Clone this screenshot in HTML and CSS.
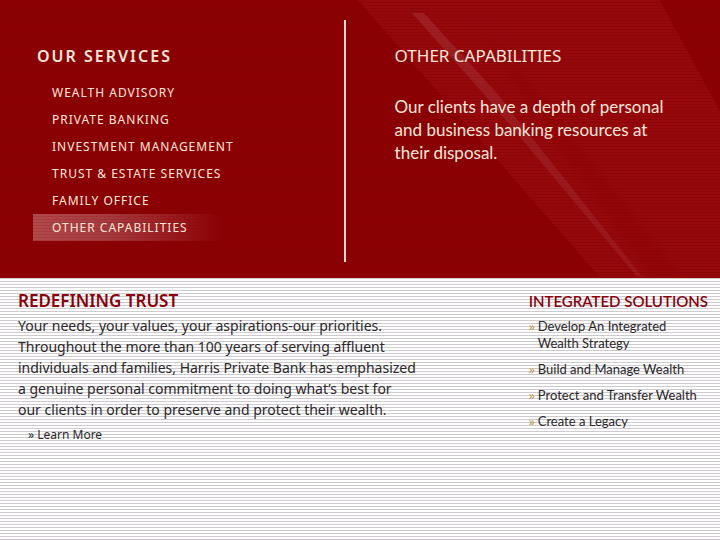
FILE: index.html
```html
<!DOCTYPE html>
<html lang="en">
<head>
<meta charset="utf-8">
<meta name="viewport" content="width=device-width, initial-scale=1">
<title>Harris Private Bank</title>
<link rel="stylesheet" href="styles.css">
</head>
<body>
<section class="hero">
  <svg class="rays" viewBox="0 0 375 278" preserveAspectRatio="none" aria-hidden="true">
    <defs>
      <linearGradient id="beam" x1="0" y1="0" x2="0" y2="1">
        <stop offset="0" stop-color="#fff" stop-opacity=".09"/>
        <stop offset=".5" stop-color="#fff" stop-opacity=".07"/>
        <stop offset="1" stop-color="#fff" stop-opacity=".06"/>
      </linearGradient>
      <filter id="soft" x="-20%" y="-20%" width="140%" height="140%"><feGaussianBlur stdDeviation="4"/></filter>
      <pattern id="lines" width="3" height="3" patternUnits="userSpaceOnUse">
        <path d="M0 0H3V2H0Z" fill="#e04a50" fill-opacity=".12"/>
        <path d="M0 2H3V3H0Z" fill="#e04a50" fill-opacity=".07"/>
      </pattern>
    </defs>
    <path d="M12 0H314L375 112V278H255Z" fill="url(#lines)"/>
    <path d="M130 20L160 55L338 278H308L200 130Z" fill="#8b0003" fill-opacity=".4" filter="url(#soft)"/>
    <path d="M66 13H78L150 92L296 276H291L138 94Z" fill="url(#beam)"/>
  </svg>
  <nav class="services">
    <h1>OUR SERVICES</h1>
    <ul>
      <li><a href="#wealth">WEALTH ADVISORY</a></li>
      <li><a href="#private">PRIVATE BANKING</a></li>
      <li><a href="#investment">INVESTMENT MANAGEMENT</a></li>
      <li><a href="#trust">TRUST &amp; ESTATE SERVICES</a></li>
      <li><a href="#family">FAMILY OFFICE</a></li>
      <li><a class="current" href="#other" aria-current="page">OTHER CAPABILITIES</a></li>
    </ul>
  </nav>
  <article class="detail" id="other">
    <h2>OTHER CAPABILITIES</h2>
    <p>Our clients have a depth of personal<br>and business banking resources at<br>their disposal.</p>
  </article>
</section>
<main class="lower">
  <section class="trust">
    <h2>REDEFINING TRUST</h2>
    <p>Your needs, your values, your aspirations-our priorities.<br>Throughout the more than 100 years of serving affluent<br>individuals and families, Harris Private Bank has emphasized<br>a genuine personal commitment to doing what’s best for<br>our clients in order to preserve and protect their wealth.</p>
    <a class="more" href="#more">» Learn More</a>
  </section>
  <section class="solutions">
    <h2>INTEGRATED SOLUTIONS</h2>
    <ul>
      <li><a href="#develop">Develop An Integrated<br>Wealth Strategy</a></li>
      <li><a href="#build">Build and Manage Wealth</a></li>
      <li><a href="#protect">Protect and Transfer Wealth</a></li>
      <li><a href="#legacy">Create a Legacy</a></li>
    </ul>
  </section>
</main>
</body>
</html>
```
FILE: styles.css
```css
* { box-sizing: border-box; }
html { min-height: 100%; background: repeating-linear-gradient(#fff 0 2px, #cecacf 2px 3px); }
body { margin: 0; font-family: "Noto Sans", "Open Sans", sans-serif; color: #2b2729; }
h1, h2, p, ul { margin: 0; padding: 0; }
ul { list-style: none; }
a { color: inherit; text-decoration: none; }

.hero {
  position: relative;
  display: grid;
  grid-template-columns: 48% 52%;
  padding: 20px 0 16px;
  color: #ffe6da;
  background: repeating-linear-gradient(#8b0003 0 2px, #870003 2px 3px);
}
.rays { position: absolute; right: 0; top: 0; width: 52%; height: 100%; }

.services { border-right: 2px solid #f6d5d2; padding: 24px 0 21px 33px; }
.services h1 { padding-left: 4px; font-size: 16px; line-height: 24px; font-weight: 600; letter-spacing: 2px; }
.services ul { display: grid; grid-auto-rows: 27px; margin-top: 11px; }
.services a {
  display: block;
  width: 190px;
  padding-left: 19px;
  font-size: 12px;
  line-height: 27px;
  letter-spacing: 1px;
  white-space: nowrap;
}
.services .current {
  background: repeating-linear-gradient(#8b000300 0 2px, #8b000330 2px 3px), linear-gradient(90deg, #b04a4d, #a53b3f 40%, #98191d 75%, #8b000300);
}
.detail { position: relative; padding: 24px 0 0 49px; }
.detail h2 { font-size: 17px; line-height: 24px; font-weight: 400; }
.detail p { margin-top: 27px; font-family: Lato, sans-serif; font-size: 17px; line-height: 23px; }

.lower { display: flex; justify-content: space-between; padding: 11px 12px 0 18px; }
.lower h2 { color: #8b0009; font-weight: 600; line-height: 24px; }
.trust h2 { font-size: 17px; }
.trust p { margin-top: 2px; font-size: 14px; line-height: 21px; }
.more { display: inline-block; margin: 5px 0 0 10px; font-size: 12px; line-height: 20px; }
.solutions { font-family: Lato, sans-serif; }
.solutions h2 { font-size: 15px; }
.solutions ul { display: grid; gap: 9px; margin-top: 5px; font-size: 13px; line-height: 17px; }
.solutions li { display: flex; gap: 3px; }
.solutions li::before { content: "»"; color: #c99447; font-family: "Noto Sans", sans-serif; font-size: 12px; }
```
